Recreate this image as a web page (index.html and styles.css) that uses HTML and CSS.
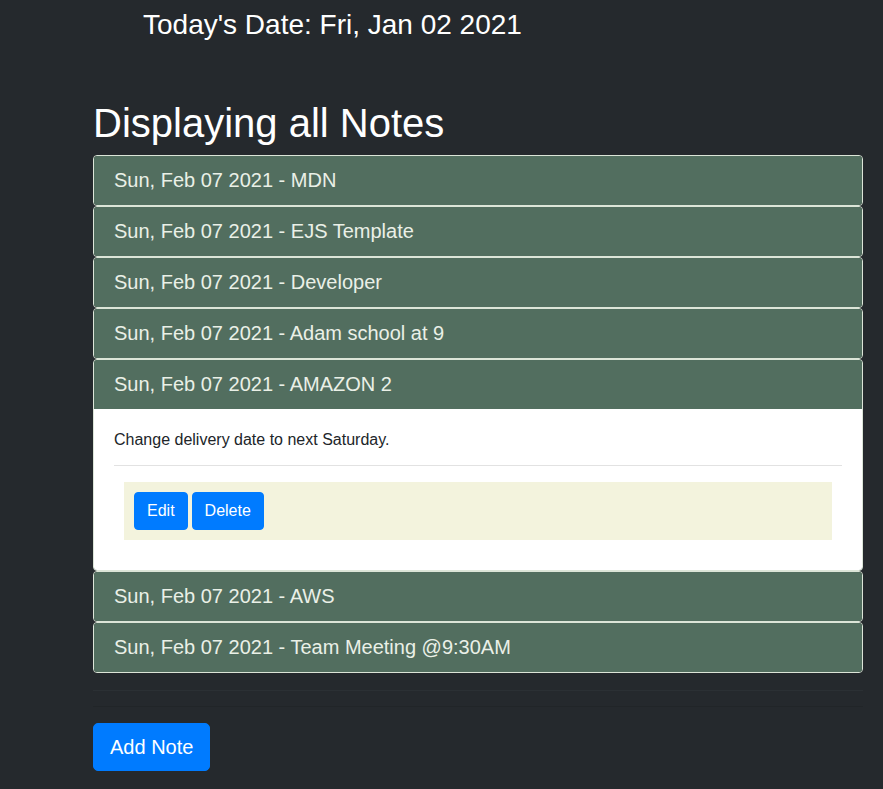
FILE: index.html
```html
<!DOCTYPE html>
<html lang="en">
<head>
<meta charset="utf-8">
<title>Notes</title>
<link rel="stylesheet" href="styles.css">
</head>
<body>
<div class="page">
  <h3 class="today">Today's Date: Fri, Jan 02 2021</h3>
  <h1 class="title">Displaying all Notes</h1>
  <div class="accordion">
    <div class="card"><div class="card-header">Sun, Feb 07 2021 - MDN</div></div>
    <div class="card"><div class="card-header">Sun, Feb 07 2021 - EJS Template</div></div>
    <div class="card"><div class="card-header">Sun, Feb 07 2021 - Developer</div></div>
    <div class="card"><div class="card-header">Sun, Feb 07 2021 - Adam school at 9</div></div>
    <div class="card">
      <div class="card-header">Sun, Feb 07 2021 - AMAZON 2</div>
      <div class="card-body">
        <p class="note-text">Change delivery date to next Saturday.</p>
        <hr class="body-hr">
        <div class="actions">
          <button class="btn">Edit</button>
          <button class="btn">Delete</button>
        </div>
      </div>
    </div>
    <div class="card"><div class="card-header">Sun, Feb 07 2021 - AWS</div></div>
    <div class="card"><div class="card-header">Sun, Feb 07 2021 - Team Meeting @9:30AM</div></div>
  </div>
  <hr class="sep sep-1">
  <hr class="sep sep-2">
  <button class="btn btn-lg">Add Note</button>
</div>
</body>
</html>
```

FILE: styles.css
```css
html, body {
  margin: 0;
  padding: 0;
  background: #25292d;
  height: 100%;
}
body {
  font-family: "Liberation Sans", Arial, sans-serif;
  color: #212529;
}
.page {
  margin-left: 93px;
  width: 770px;
  padding-top: 8px;
}
.today {
  margin: 0 0 0 50px;
  font-size: 28px;
  font-weight: 400;
  line-height: 34px;
  color: #ffffff;
}
.title {
  margin: 57px 0 8px;
  font-size: 40px;
  font-weight: 400;
  line-height: 48px;
  color: #ffffff;
}
.accordion {
  display: flex;
  flex-direction: column;
}
.card {
  border: 1px solid #dce5d8;
  border-radius: 4px;
  overflow: hidden;
  background: #526e5f;
}
.card-header {
  padding: 12px 20px;
  font-size: 20px;
  line-height: 25px;
  color: #eaf0e7;
  background: #526e5f;
}
.card-body {
  background: #ffffff;
  padding: 21px 20px 20px;
}
.note-text {
  margin: 0 0 15px;
  font-size: 16px;
  line-height: 20px;
}
.body-hr {
  margin: 0 0 16px;
  border: 0;
  border-top: 1px solid #e2e2e2;
}
.actions {
  margin: 0 10px 10px;
  padding: 10px;
  background: #f3f3dd;
  display: flex;
  gap: 4px;
}
.btn {
  font-family: "Liberation Sans", Arial, sans-serif;
  font-size: 16px;
  line-height: 24px;
  padding: 6px 12px;
  border: 1px solid #007bff;
  border-radius: 4px;
  background: #007bff;
  color: #ffffff;
}
.btn-lg {
  font-size: 20px;
  line-height: 30px;
  padding: 8px 16px;
  border-radius: 5px;
}
.sep {
  border: 0;
  height: 0;
  margin: 0;
}
.sep-1 {
  margin-top: 17px;
  border-top: 1px solid #2b3034;
}
.sep-2 {
  margin-top: 15px;
  margin-bottom: 16px;
  border-top: 1px solid #212528;
}
```
